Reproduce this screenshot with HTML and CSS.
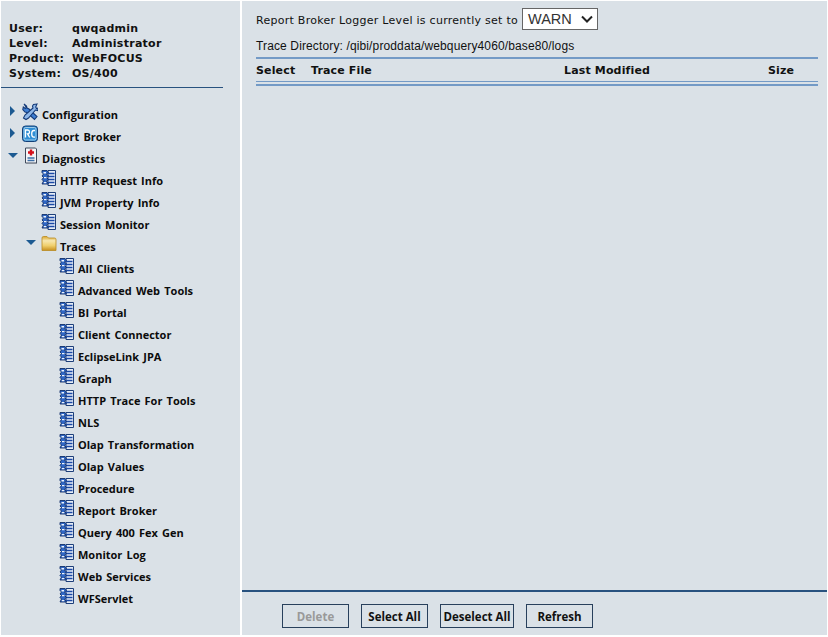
FILE: index.html
```html
<!DOCTYPE html>
<html lang="en">
<head>
<meta charset="utf-8">
<title>Diagnostics</title>
<link rel="stylesheet" href="styles.css">
</head>
<body>
<svg class="defs" width="0" height="0" aria-hidden="true">
  <defs>
    <linearGradient id="gold" x1="0" y1="0" x2="0" y2="1">
      <stop offset="0" stop-color="#d9a62e"/>
      <stop offset=".3" stop-color="#f7e7ae"/>
      <stop offset=".65" stop-color="#f0cf6c"/>
      <stop offset="1" stop-color="#c8901e"/>
    </linearGradient>
    <symbol id="doc" viewBox="0 0 16 18">
      <path d="M7 1.500h7.500v15H7z" fill="#e6edf7" stroke="#1d3f7a"/>
      <path d="M7 4.500h6.500M7 7.500h6.500M7 10.500h6.500M7 13.500h6.500" stroke="#1a49a6" stroke-width="1.700"/>
      <path d="M1 1.500h5l1.500 2-2 1.500 2 2-2 1.500 2 2-2 1.500 2 3H1l1.500-3-1.500-1.500 1.500-2-1.500-1.500 1.500-2-1.500-1.500z" fill="#2f66c4" stroke="#12306a" stroke-width=".9"/>
      <path d="M2.500 3h2.500v1.500H2.500zM3 8h2.500v1.300H3zM2.800 13h2.500v1.300H2.800z" fill="#eef4fc"/>
    </symbol>
  </defs>
</svg>
<div class="page">
  <aside class="side">
    <dl class="info">
      <dt>User:</dt><dd>qwqadmin</dd>
      <dt>Level:</dt><dd>Administrator</dd>
      <dt>Product:</dt><dd>WebFOCUS</dd>
      <dt>System:</dt><dd>OS/400</dd>
    </dl>
    <ul class="tree">
      <li class="row">
        <span class="arrow right"></span>
        <svg class="icon" viewBox="0 0 16 18"><path d="M2 1l2.500 2 .5 2 2 1 2 2 6 5.500-2.500 3L6.500 11 5 9.500l-2-.5L.8 6.500l.5-2.500 2 1.500 1-1z" fill="#3f7fd4" stroke="#143a78" stroke-width="1.100"/><path d="M15 1l-3.500.5-1 1.500.5 2-8 7-1.500 3 2.500 1.500 2.500-1.500 7-8 2 .5 1-2.500-2 .5-.8-1.500z" fill="#8fb8ea" stroke="#143a78" stroke-width="1.100"/></svg>
        <span class="label">Configuration</span>
      </li>
      <li class="row">
        <span class="arrow right"></span>
        <svg class="icon" viewBox="0 0 16 18"><rect x=".5" y="1" width="15" height="15.500" rx="3" fill="#2a86c9" stroke="#123f78"/><rect x="2" y="2.500" width="12" height="12.500" rx="1.500" fill="#2f8fd6" stroke="#cfe6f7" stroke-width=".7"/><path d="M3.500 12.500V5h2.300q1.700 0 1.700 1.900T5.500 8.800l2.200 3.700M13 5.500h-1.300q-2 0-2 3.300t2 3.300H13" fill="none" stroke="#fff" stroke-width="1.300"/></svg>
        <span class="label">Report Broker</span>
      </li>
      <li class="row">
        <span class="arrow down"></span>
        <svg class="icon" viewBox="0 0 16 18"><path d="M3.500 1h10l1 1v14h-11z" fill="#f4f4f6" stroke="#3f4a5c"/><path d="M9 2.500v6M6 5.500h6" stroke="#d4111c" stroke-width="2.400"/><path d="M5.500 11h7M5.500 13.500h7" stroke="#3a6ea8" stroke-width="1.300"/><path d="M4 16.500h11" stroke="#8a919c"/></svg>
        <span class="label">Diagnostics</span>
      </li>
      <li class="row lvl1"><svg class="icon"><use href="#doc"/></svg><span class="label">HTTP Request Info</span></li>
      <li class="row lvl1"><svg class="icon"><use href="#doc"/></svg><span class="label">JVM Property Info</span></li>
      <li class="row lvl1"><svg class="icon"><use href="#doc"/></svg><span class="label">Session Monitor</span></li>
      <li class="row lvl1">
        <span class="arrow down"></span>
        <svg class="icon" viewBox="0 0 16 18"><path d="M1 3q0-1.500 1.500-1.500h3.500L7.500 3H13.500q1.500 0 1.500 1.500V15.500H1z" fill="url(#gold)" stroke="#b98a22" stroke-width=".8"/></svg>
        <span class="label">Traces</span>
      </li>
      <li class="row lvl2"><svg class="icon"><use href="#doc"/></svg><span class="label">All Clients</span></li>
      <li class="row lvl2"><svg class="icon"><use href="#doc"/></svg><span class="label">Advanced Web Tools</span></li>
      <li class="row lvl2"><svg class="icon"><use href="#doc"/></svg><span class="label">BI Portal</span></li>
      <li class="row lvl2"><svg class="icon"><use href="#doc"/></svg><span class="label">Client Connector</span></li>
      <li class="row lvl2"><svg class="icon"><use href="#doc"/></svg><span class="label">EclipseLink JPA</span></li>
      <li class="row lvl2"><svg class="icon"><use href="#doc"/></svg><span class="label">Graph</span></li>
      <li class="row lvl2"><svg class="icon"><use href="#doc"/></svg><span class="label">HTTP Trace For Tools</span></li>
      <li class="row lvl2"><svg class="icon"><use href="#doc"/></svg><span class="label">NLS</span></li>
      <li class="row lvl2"><svg class="icon"><use href="#doc"/></svg><span class="label">Olap Transformation</span></li>
      <li class="row lvl2"><svg class="icon"><use href="#doc"/></svg><span class="label">Olap Values</span></li>
      <li class="row lvl2"><svg class="icon"><use href="#doc"/></svg><span class="label">Procedure</span></li>
      <li class="row lvl2"><svg class="icon"><use href="#doc"/></svg><span class="label">Report Broker</span></li>
      <li class="row lvl2"><svg class="icon"><use href="#doc"/></svg><span class="label">Query 400 Fex Gen</span></li>
      <li class="row lvl2"><svg class="icon"><use href="#doc"/></svg><span class="label">Monitor Log</span></li>
      <li class="row lvl2"><svg class="icon"><use href="#doc"/></svg><span class="label">Web Services</span></li>
      <li class="row lvl2"><svg class="icon"><use href="#doc"/></svg><span class="label">WFServlet</span></li>
    </ul>
  </aside>
  <main class="main">
    <div class="content">
      <div class="level">
        <span class="level-text">Report Broker Logger Level is currently set to</span>
        <span class="select">WARN<svg class="chev" viewBox="0 0 12 8"><path d="M1 1.500l5 5 5-5" fill="none" stroke="#222" stroke-width="2"/></svg></span>
      </div>
      <div class="dir">Trace Directory: /qibi/proddata/webquery4060/base80/logs</div>
      <div class="thead">
        <span class="c-select">Select</span>
        <span class="c-file">Trace File</span>
        <span class="c-mod">Last Modified</span>
        <span class="c-size">Size</span>
      </div>
      <div class="tfoot"></div>
    </div>
    <div class="actions">
      <button class="btn off" type="button">Delete</button>
      <button class="btn" type="button">Select All</button>
      <button class="btn" type="button">Deselect All</button>
      <button class="btn" type="button">Refresh</button>
    </div>
  </main>
</div>
</body>
</html>
```
FILE: styles.css
```css
* { box-sizing: border-box; }
html, body { margin: 0; height: 100%; background: #fff; overflow: hidden; }
.defs { position: absolute; }
.page { display: flex; gap: 2px; height: 635px; padding: 1px 1px 0; }
.side { width: 239px; flex: none; background: #dae1e7; }
.main { flex: 1; background: #dae1e7; display: flex; flex-direction: column; }

.info {
  margin: 0; padding: 20px 0 6px 8px; width: 222px; height: 87px;
  border-bottom: 1px solid #28527f;
  display: grid; grid-template-columns: 63px 1fr; grid-auto-rows: 15px;
  font: bold 11px/15px "DejaVu Sans", sans-serif; color: #111; letter-spacing: .27px;
}
.info dt, .info dd { margin: 0; }

.tree { list-style: none; margin: 16px 0 0; padding: 0; }
.row {
  height: 22px; display: flex; align-items: flex-start; position: relative;
  padding-left: 21px;
  font: bold 11px/22px "Open Sans", sans-serif; color: #0c0c0c; word-spacing: 1.300px;
}
.lvl1 { padding-left: 40px; }
.lvl2 { padding-left: 58px; }
.icon { width: 16px; height: 18px; flex: none; margin-top: -1px; margin-right: 3px; }
.label { display: block; white-space: nowrap; }
.row:not(.lvl1):not(.lvl2) .label { margin-left: 1px; }

.arrow { position: absolute; width: 0; height: 0; }
.arrow.right {
  left: 9px; top: 2px;
  border-left: 5px solid #1c5a92;
  border-top: 5px solid transparent; border-bottom: 5px solid transparent;
}
.arrow.down {
  left: 7px; top: 5px;
  border-top: 5px solid #1c5a92;
  border-left: 5px solid transparent; border-right: 5px solid transparent;
}
.lvl1 .arrow.down { left: 25px; top: 4px; }

.content { flex: 1; padding: 7px 9px 0 14px; }
.level { display: flex; align-items: flex-start; gap: 4px; height: 25px; }
.level-text { font: 11px/26px "DejaVu Sans", sans-serif; color: #111; letter-spacing: .27px; }
.select {
  width: 76px; height: 22px; padding: 0 4px 0 5px; background: #fff; border: 1px solid #666;
  font: 14.500px/20px "Liberation Sans", sans-serif; color: #333;
  display: flex; align-items: center; justify-content: space-between;
}
.chev { width: 12px; height: 8px; }
.dir { font: 12px/16px "Liberation Sans", sans-serif; color: #111; margin-top: 5px; height: 19px; letter-spacing: .13px; }
.thead {
  height: 25px; border-top: 2px solid #739ac6; border-bottom: 1px solid #739ac6;
  display: flex; align-items: center;
  font: bold 11px "DejaVu Sans", sans-serif; color: #111; letter-spacing: .15px;
}
.c-select { width: 55px; }
.c-file { width: 253px; }
.c-mod { width: 204px; }
.tfoot { height: 2px; background: #739ac6; margin-top: 2px; }

.actions {
  height: 45px; border-top: 2px solid #28527f;
  display: flex; align-items: flex-start; padding: 12px 0 0 40px;
}
.btn {
  height: 24px; padding: 0; margin-right: 12px; border: 1px solid #28405c; background: #dae1e7;
  font: bold 11.500px "Open Sans", sans-serif; color: #111;
}
.btn:nth-child(1), .btn:nth-child(2), .btn:nth-child(4) { width: 67px; }
.btn:nth-child(3) { width: 74px; }
.btn.off { color: #999; }
```
